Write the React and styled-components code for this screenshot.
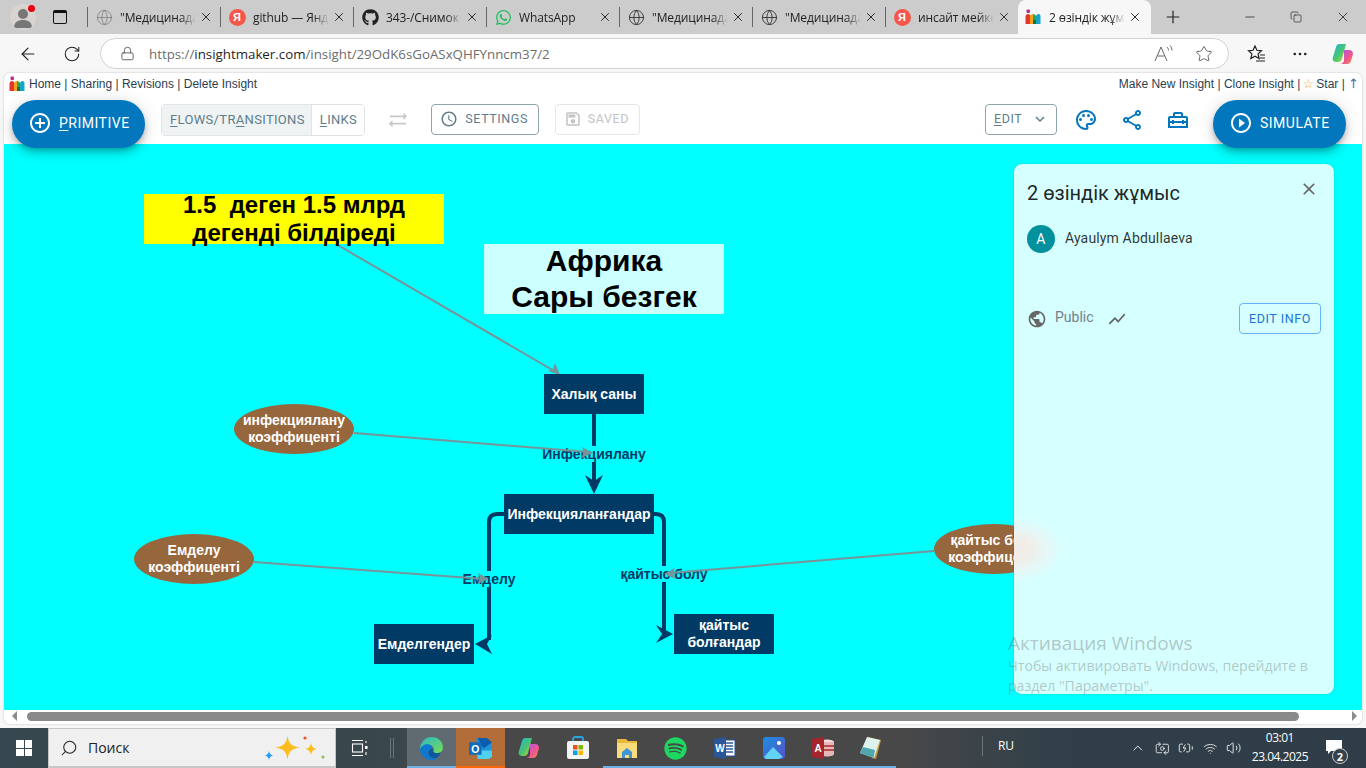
import React from 'react';
import styled, { createGlobalStyle } from 'styled-components';
import { ArrowLeft, RotateCw, Lock, Star, MoreHorizontal, Plus, Minus, X, Copy, Globe, Search, ChevronUp, Volume2, Wifi, BatteryCharging, SwitchCamera } from 'lucide-react';
import { FaGithub, FaWhatsapp, FaSpotify } from 'react-icons/fa';
import {
  MdAddCircleOutline, MdAccessTime, MdOutlineSave, MdSyncAlt, MdExpandMore, MdOutlinePalette,
  MdOutlineShare, MdOutlineHomeRepairService, MdPlayCircleOutline, MdClose, MdPublic, MdShowChart
} from 'react-icons/md';

const NAVY = '#023a66';
const GREY_LINK = '#76949a';

const Global = createGlobalStyle`
  html, body { margin: 0; padding: 0; background: #f7f7f7; overflow: hidden; }
  * { box-sizing: border-box; }
`;

const Frame = styled.div`
  position: relative;
  width: 1366px;
  height: 768px;
  overflow: hidden;
  display: flex;
  flex-direction: column;
  background: #f7f7f7;
  font-family: "Open Sans", "Noto Sans", sans-serif;
`;

/* browser chrome */
const TabStrip = styled.div`
  height: 34px;
  display: flex;
  align-items: stretch;
  background: #cccccc;
  color: #222;
`;
const Profile = styled.div`
  width: 26px;
  height: 26px;
  margin: 4px 0 0 10px;
  border-radius: 50%;
  background: #d9d4d0;
  overflow: hidden;
`;
const ProfileWrap = styled.div`
  position: relative;
  width: 46px;
`;
const RedDot = styled.span`
  position: absolute;
  top: 5px;
  left: 28px;
  width: 7px;
  height: 7px;
  border-radius: 50%;
  background: #e8000d;
`;
const SideIcon = styled.div`
  width: 14px;
  height: 14px;
  margin: 10px 0 0 7px;
  border: 1.6px solid #111;
  border-top-width: 3px;
  border-radius: 2px;
`;
const Tabs = styled.div`
  display: flex;
  margin-left: 20px;
`;
const TabItem = styled.div`
  position: relative;
  width: 133px;
  display: flex;
  align-items: center;
  padding-left: ${p => (p.$active ? '6px' : '8px')};
  background: ${p => (p.$active ? '#f7f7f7' : 'transparent')};
  border-radius: ${p => (p.$active ? '8px 8px 0 0' : '0')};
  font-size: 12px;
  &::before {
    content: '';
    display: ${p => (p.$active ? 'none' : 'block')};
    position: absolute;
    left: 0;
    top: 7px;
    height: 20px;
    width: 1px;
    background: #666;
  }
`;
const TabIcon = styled.span`
  width: 18px;
  height: 18px;
  flex: none;
  display: flex;
  align-items: center;
  justify-content: center;
`;
const TabTitle = styled.span`
  width: 76px;
  margin-left: 7px;
  white-space: nowrap;
  overflow: hidden;
  letter-spacing: -0.1px;
  -webkit-mask-image: linear-gradient(to right, #000 80%, transparent 100%);
  mask-image: linear-gradient(to right, #000 80%, transparent 100%);
`;
const TabClose = styled.span`
  display: flex;
  margin-left: 3px;
  color: #222;
`;
const Yandex = styled.span`
  width: 17px;
  height: 17px;
  border-radius: 50%;
  background: #f7574a;
  color: #fff;
  font: bold 11px "Liberation Sans", sans-serif;
  display: flex;
  align-items: center;
  justify-content: center;
`;
const NewTab = styled.div`
  width: 44px;
  display: flex;
  align-items: center;
  justify-content: center;
`;
const WindowButtons = styled.div`
  margin-left: auto;
  display: flex;
  align-items: center;
`;
const WindowButton = styled.div`
  width: 46.5px;
  display: flex;
  justify-content: center;
  color: #222;
`;

const AddressRow = styled.div`
  height: 39px;
  display: flex;
  align-items: center;
  color: #222;
`;
const NavButton = styled.div`
  width: 44px;
  margin-left: ${p => p.$ml || 0}px;
  display: flex;
  justify-content: center;
`;
const UrlPill = styled.div`
  width: 1129px;
  height: 31px;
  margin-left: 6px;
  display: flex;
  align-items: center;
  padding: 0 15px 0 19px;
  background: #fff;
  border: 1px solid #d2d2d2;
  border-radius: 16px;
`;
const Url = styled.span`
  margin-left: 14px;
  font-size: 13.3px;
  color: #6d6d6d;
  b { font-weight: 400; color: #1f1f1f; }
`;
const ReadAloud = styled.svg`
  margin-left: auto;
`;
const PillStar = styled.span`
  display: flex;
  margin-left: 20px;
  color: #555;
`;
const BrowserTools = styled.div`
  display: flex;
  align-items: center;
  margin-left: 6px;
`;
const BrowserTool = styled.div`
  width: 43px;
  display: flex;
  justify-content: center;
`;

/* page */
const Page = styled.div`
  width: 1358px;
  height: 651px;
  margin-left: 4px;
  display: flex;
  flex-direction: column;
  background: #fff;
  border-radius: 6px;
  box-shadow: 0 0 2px rgba(0, 0, 0, 0.25);
`;
const TopLinks = styled.div`
  height: 20px;
  display: flex;
  align-items: center;
  justify-content: space-between;
  padding: 2px 3px 0 5px;
  font: 12px/14px "Liberation Sans", Arial, sans-serif;
  color: #2c3e50;
`;
const LinkGroup = styled.div`
  display: flex;
  align-items: center;
  gap: 4px;
`;
const GoldStar = styled.span`
  margin: 0 -1px;
  color: #e0a526;
  font: 12.5px/1 "DejaVu Sans", sans-serif;
`;
const UpArrow = styled.span`
  color: #3b6fb5;
  font: 13px/1 "DejaVu Sans", sans-serif;
`;
const Toolbar = styled.div`
  position: relative;
  z-index: 3;
  height: 51px;
  display: flex;
  align-items: flex-start;
  padding: 7px 16px 0 8px;
  font-family: Roboto, sans-serif;
`;
const Fab = styled.button`
  width: 133px;
  height: 48px;
  flex: none;
  display: flex;
  align-items: center;
  gap: 7px;
  padding: 0 0 2px 16px;
  border: none;
  border-radius: 24px;
  background: #0277bd;
  color: #fff;
  font: 400 14px Roboto, sans-serif;
  letter-spacing: 0.5px;
  box-shadow: 0 3px 5px -1px rgba(0, 0, 0, 0.2), 0 6px 10px rgba(0, 0, 0, 0.14), 0 1px 18px rgba(0, 0, 0, 0.12);
  u { text-decoration-thickness: 1px; text-underline-offset: 2px; }
`;
const FlowGroup = styled.div`
  width: 204px;
  display: flex;
  height: 32px;
  margin: 4px 0 0 16px;
  border: 1px solid #dfe5e7;
  border-radius: 4px;
  overflow: hidden;
`;
const Toggle = styled.div`
  flex: ${p => (p.$on ? 'none' : '1')};
  display: flex;
  align-items: center;
  padding: 0 6px 2px 8px;
  background: ${p => (p.$on ? '#eff3f4' : '#fff')};
  border-left: ${p => (p.$on ? 'none' : '1px solid #dfe5e7')};
  color: #607d8b;
  font-size: 13px;
  letter-spacing: 0.33px;
  u { text-underline-offset: 2px; }
`;
const SwapSlot = styled.div`
  width: 66px;
  height: 32px;
  margin-top: 4px;
  display: flex;
  align-items: center;
  justify-content: center;
  color: #c9c9c9;
`;
const OutlineButton = styled.div`
  height: 31px;
  width: ${p => p.$w}px;
  margin: 4px 0 0 ${p => p.$ml || 0}px;
  display: flex;
  align-items: center;
  justify-content: space-between;
  padding: 0 10px 2px 8px;
  border: 1px solid ${p => (p.$off ? '#e6e6e6' : '#90a4ae')};
  border-radius: 4px;
  color: ${p => (p.$off ? '#c4c4c4' : '#607d8b')};
  font-size: 12.5px;
  letter-spacing: 0.6px;
  u { text-underline-offset: 2px; }
`;
const EditChevron = styled(MdExpandMore)`
  margin-right: -3px;
`;
const Spacer = styled.div`
  flex: 1;
`;
const IconSlot = styled.div`
  width: 46px;
  height: 32px;
  margin: 4px ${p => p.$mr || 0}px 0 ${p => p.$ml || 0}px;
  display: flex;
  align-items: center;
  justify-content: center;
  color: #0277bd;
`;

/* diagram */
const Canvas = styled.div`
  position: relative;
  flex: none;
  height: 566px;
  background: #00ffff;
  overflow: hidden;
`;
const EdgeLayer = styled.svg`
  position: absolute;
  left: 0;
  top: 0;
  z-index: ${p => p.$z};
`;
const Box = styled.div`
  position: absolute;
  left: ${p => p.$x - 4}px;
  top: ${p => p.$y - 144}px;
  width: ${p => p.$w}px;
  height: ${p => p.$h}px;
  z-index: 3;
  display: flex;
  align-items: center;
  justify-content: center;
  text-align: center;
  font-family: "Liberation Sans", Arial, sans-serif;
  font-weight: 700;
`;
const Stock = styled(Box)`
  background: ${NAVY};
  color: #fff;
  font-size: 14px;
  line-height: 17px;
`;
const Variable = styled(Box)`
  background: #96663d;
  color: #fff;
  border-radius: 50%;
  font-size: 14px;
  line-height: 17px;
`;
const Note = styled(Box)`
  padding-bottom: ${p => p.$pb || 0}px;
  background: ${p => p.$bg};
  color: #000;
  font-size: ${p => p.$size}px;
  line-height: ${p => p.$lh}px;
`;
const FlowLabel = styled.div`
  position: absolute;
  left: ${p => p.$x - 4}px;
  top: ${p => p.$y - 144}px;
  transform: translate(-50%, -50%);
  z-index: 2;
  color: ${NAVY};
  background: #00ffff;
  font: 700 14px/16px "Liberation Sans", Arial, sans-serif;
  white-space: nowrap;
`;

const Panel = styled.div`
  position: absolute;
  left: 1010px;
  top: 20px;
  width: 320px;
  height: 530px;
  z-index: 5;
  padding: 16px 13px;
  background:
    radial-gradient(ellipse 50px 34px at 0 385px, #f3ebe5 0%, #f1eeea 35%, rgba(233, 245, 244, 0.8) 65%, rgba(214, 255, 255, 0) 100%),
    #d6ffff;
  border-radius: 8px;
  box-shadow: 0 0 2px rgba(0, 0, 0, 0.2);
  font-family: Roboto, sans-serif;
`;
const PanelHead = styled.div`
  display: flex;
  justify-content: space-between;
  align-items: flex-start;
  height: 45px;
  color: rgba(0, 0, 0, 0.87);
  font-size: 20px;
  line-height: 26px;
`;
const CloseBtn = styled.span`
  display: flex;
  margin: -1px 2px 0 0;
  color: #666;
`;
const Author = styled.div`
  display: flex;
  align-items: center;
  gap: 10px;
  font-size: 14px;
  letter-spacing: 0.15px;
  color: rgba(0, 0, 0, 0.8);
  span:last-child { margin-top: -2px; }
`;
const Avatar = styled.div`
  width: 28px;
  height: 28px;
  border-radius: 50%;
  background: #00909e;
  color: #fff;
  display: flex;
  align-items: center;
  justify-content: center;
  font-size: 14px;
`;
const PanelRow = styled.div`
  display: flex;
  align-items: center;
  margin-top: 50px;
  color: #666;
  font-size: 14px;
`;
const PublicText = styled.span`
  margin: -3px 0 0 8px;
  color: #75808a;
`;
const TrendIcon = styled.span`
  display: flex;
  margin-left: 13px;
  color: #666;
`;
const EditInfo = styled.div`
  margin-left: auto;
  width: 82px;
  height: 31px;
  display: flex;
  align-items: center;
  justify-content: center;
  border: 1px solid #64b5f6;
  border-radius: 4px;
  color: #1976d2;
  font-size: 12.5px;
  letter-spacing: 0.6px;
`;

/* scrollbar */
const ScrollRow = styled.div`
  flex: 1;
  display: flex;
  align-items: center;
  padding: 1px 5px 3px 8px;
  gap: 7px;
`;
const ScrollArrow = styled.span`
  width: 0;
  height: 0;
  border-top: 5px solid transparent;
  border-bottom: 5px solid transparent;
  ${p => (p.$right ? 'border-left: 5px solid #8a8a8a;' : 'border-right: 5px solid #8a8a8a;')}
  ${p => (p.$right ? 'margin-left: auto;' : '')}
`;
const ScrollThumb = styled.div`
  width: 1272px;
  height: 9px;
  margin-left: 3px;
  border-radius: 5px;
  background: #8a8a8a;
`;

/* taskbar */
const Taskbar = styled.div`
  margin-top: 4px;
  height: 40px;
  flex: none;
  display: flex;
  align-items: stretch;
  color: #fff;
  background: linear-gradient(to right, #37474f 0, #3a474d 400px, #484848 420px, #484848 900px, #303f49 1060px, #2e3d47 100%);
`;
const StartButton = styled.div`
  width: 48px;
  display: flex;
  align-items: center;
  justify-content: center;
`;
const WinLogo = styled.div`
  display: grid;
  grid-template-columns: 7.5px 7.5px;
  grid-template-rows: 7.5px 7.5px;
  gap: 1px;
  span { background: #fff; }
`;
const SearchBox = styled.div`
  width: 288px;
  display: flex;
  align-items: center;
  padding: 0 10px 0 11px;
  background: #f0f0f0;
  border: 1px solid #c6c6c6;
  border-bottom-width: 2px;
  color: #222;
  font-size: 14px;
  gap: 10px;
`;
const LensIcon = styled(Search)`
  transform: scaleX(-1);
`;
const Sparkles = styled.svg`
  margin-left: auto;
`;
const TaskView = styled.div`
  width: 54px;
  padding-right: 6px;
  display: flex;
  align-items: center;
  justify-content: center;
`;
const Grip = styled.div`
  width: 17px;
  display: flex;
  align-items: center;
  gap: 2px;
  span { width: 1px; height: 20px; background: #66747b; }
`;
const Apps = styled.div`
  display: flex;
  margin-right: 86px;
`;
const AppSlot = styled.div`
  width: 48.9px;
  display: flex;
  align-items: center;
  justify-content: center;
  background: ${p => p.$bg || 'transparent'};
  box-shadow: ${p => (p.$line ? `inset 0 -2px 0 ${p.$line}` : 'none')};
`;
const Lang = styled.div`
  display: flex;
  align-items: center;
  gap: 15px;
  width: 148px;
  font-size: 12px;
  padding-bottom: 5px;
  i { width: 1px; height: 20px; background: #66747b; }
`;
const Tray = styled.div`
  display: flex;
  align-items: center;
  gap: 9px;
  width: 112px;
`;
const Clock = styled.div`
  width: 76px;
  text-align: center;
  font-size: 12px;
  line-height: 19px;
  letter-spacing: -0.5px;
`;
const Notif = styled.div`
  position: relative;
  width: 32px;
  display: flex;
  align-items: center;
  justify-content: center;
  padding-bottom: 3px;
`;
const NotifCount = styled.span`
  position: absolute;
  left: 14px;
  top: 20px;
  width: 16px;
  height: 16px;
  border-radius: 50%;
  border: 1px solid #ccc;
  background: #35434c;
  font-size: 11px;
  font-weight: 700;
  display: flex;
  align-items: center;
  justify-content: center;
`;

/* activation watermark */
const Watermark = styled.div`
  position: absolute;
  left: 1008px;
  top: 630px;
  z-index: 9;
  color: rgba(120, 120, 120, 0.42);
  font-size: 14.1px;
  line-height: 20px;
  pointer-events: none;
`;
const WatermarkTitle = styled.div`
  font-size: 19px;
  line-height: 26px;
`;

const InsightLogo = ({ size = 16 }) => (
  <svg width={size} height={size} viewBox="0 0 16 16">
    <rect x="1.500" y="0.500" width="3.500" height="3.500" rx="1" fill="#b0308f" />
    <path d="M0.500 15V8c0-2 1-3 2.500-3S5 6 5.500 7v8z" fill="#e5352e" />
    <path d="M5 7c.7-1 1.500-2 3-2v10H5z" fill="#f7a21b" />
    <path d="M8 5c1.500 0 2.300 1 3 2v8H8z" fill="#2aa84a" />
    <path d="M8 11h3v4H8z" fill="#15703a" />
    <path d="M11 7c.5-1 1-2 2.500-2S15.500 6 15.500 8v7H11z" fill="#16a6c9" />
  </svg>
);

const ProfileArt = () => (
  <svg width="26" height="26" viewBox="0 0 26 26">
    <circle cx="13" cy="10" r="5" fill="#777" />
    <path d="M4 24c0-6 4-8 9-8s9 2 9 8z" fill="#777" />
  </svg>
);

const CopilotMark = ({ size = 24 }) => (
  <svg width={size} height={size} viewBox="0 0 24 24">
    <defs>
      <linearGradient id="cpA" x1="0" y1="0" x2="1" y2="1">
        <stop offset="0" stopColor="#22b4e8" />
        <stop offset="0.55" stopColor="#48c66a" />
        <stop offset="1" stopColor="#f6d33c" />
      </linearGradient>
      <linearGradient id="cpB" x1="0" y1="0" x2="1" y2="1">
        <stop offset="0" stopColor="#a855f7" />
        <stop offset="0.6" stopColor="#f0568c" />
        <stop offset="1" stopColor="#f5903d" />
      </linearGradient>
    </defs>
    <path d="M8 2h7l-4 15c-.5 2-2 3-4 3H5c-3 0-4-3-3-5l3-10c.5-2 1.500-3 3-3z" fill="url(#cpA)" />
    <path d="M13 8h5c3 0 4 2 4 4l-2 7c-.6 2-2 3-4 3h-7c2 0 3-1 4-3z" fill="url(#cpB)" />
  </svg>
);

const Edge = () => (
  <svg width="25" height="25" viewBox="0 0 24 24">
    <defs>
      <linearGradient id="edgeG" x1="0" y1="0" x2="1" y2="1">
        <stop offset="0" stopColor="#29b8c8" />
        <stop offset="1" stopColor="#78dc55" />
      </linearGradient>
    </defs>
    <path d="M12 1c6.500 0 11 4.500 11 10 0 3.500-3 5.500-6 5.500-1.500 0-3-.5-3.500-1.500 1-1 1-2 .5-3.500C13 9 10 8 7 9 4 10 2 12.500 1 14 .5 7 5.500 1 12 1z" fill="url(#edgeG)" />
    <path d="M1 13c1-3 4-5 7-5 3 0 5 2 5 4-2 0-4 2-4 4 0 3 3 6 8 5-1.500 1.500-3.500 2-5 2C6 23 1.500 18.500 1 13z" fill="#0d78d0" />
    <path d="M9 16c0-2 2-4 4-4 0 2 1 4.500 4 4.500 1.500 0 3-.5 4-1-1 3-2.500 4.500-4 5.500-5 1-8-2-8-5z" fill="#10589e" />
  </svg>
);
const Outlook = () => (
  <svg width="25" height="25" viewBox="0 0 24 24">
    <path d="M8 2h10l5 4v14l-3 2H9z" fill="#1f94da" />
    <path d="M9 2h9l5 4-8 6z" fill="#0d5cab" />
    <path d="M9 14h14v6l-3 2H9z" fill="#4fd0ee" />
    <rect x="1" y="6" width="12" height="12" fill="#0f6cbd" />
    <text x="7" y="16" textAnchor="middle" fontFamily="Liberation Sans" fontSize="10" fontWeight="700" fill="#fff">O</text>
  </svg>
);
const Store = () => (
  <svg width="24" height="24" viewBox="0 0 24 24">
    <path d="M7 6V3c0-1 1-2 2-2h6c1 0 2 1 2 2v3" fill="none" stroke="#2aa5df" strokeWidth="1.800" />
    <rect x="1" y="5" width="22" height="18" rx="2" fill="#f4f4f4" />
    <rect x="7" y="9" width="4.500" height="4.500" fill="#f25022" />
    <rect x="12.500" y="9" width="4.500" height="4.500" fill="#7fba00" />
    <rect x="7" y="14.500" width="4.500" height="4.500" fill="#00a4ef" />
    <rect x="12.500" y="14.500" width="4.500" height="4.500" fill="#ffb900" />
  </svg>
);
const Folder = () => (
  <svg width="24" height="24" viewBox="0 0 24 24">
    <path d="M2 3h9l2 2h9v17H2z" fill="#e8b93a" />
    <path d="M2 7h20v15H2z" fill="#f8dc7b" />
    <path d="M7 22v-6l5-4 5 4v6h-3v-3h-4v3z" fill="#3f95d6" />
  </svg>
);
const Word = () => (
  <svg width="24" height="24" viewBox="0 0 24 24">
    <path d="M10 4h12v16H10z" fill="#fff" stroke="#2b579a" />
    <path d="M13 7h7M13 10h7M13 13h7M13 16h7" stroke="#2b579a" strokeWidth="1.400" />
    <path d="M1 3l12-2v22L1 21z" fill="#2b579a" />
    <text x="7" y="16" textAnchor="middle" fontFamily="Liberation Sans" fontSize="10" fontWeight="700" fill="#fff">W</text>
  </svg>
);
const Photos = () => (
  <svg width="24" height="24" viewBox="0 0 24 24">
    <defs>
      <linearGradient id="phG" x1="0" y1="0" x2="1" y2="1">
        <stop offset="0" stopColor="#1a8fe0" />
        <stop offset="1" stopColor="#5a4fc9" />
      </linearGradient>
    </defs>
    <rect x="1" y="1" width="22" height="22" rx="3" fill="url(#phG)" />
    <circle cx="17" cy="7" r="2" fill="#fff" />
    <path d="M2 21l9-10 10 10-4 2H4z" fill="#62d2f5" />
  </svg>
);
const Access = () => (
  <svg width="24" height="24" viewBox="0 0 24 24">
    <ellipse cx="16" cy="6" rx="7" ry="2.500" fill="#f6dcdc" />
    <path d="M10 6h13v12c0 1.500-3 2.500-7 2.500s-6-1-6-2.500z" fill="#e8b8b8" />
    <path d="M12 10h11M12 14h11" stroke="#a4262c" strokeWidth="1.600" />
    <path d="M1 3l12-2v22L1 21z" fill="#a4262c" />
    <text x="7" y="16" textAnchor="middle" fontFamily="Liberation Sans" fontSize="10" fontWeight="700" fill="#fff">A</text>
  </svg>
);
const Notes = () => (
  <svg width="24" height="24" viewBox="0 0 24 24">
    <path d="M9 1l13 3-5 19-4-1z" fill="#c89a40" />
    <path d="M8 1l13 3-6 18L1 17z" fill="#dff2ee" />
    <path d="M4 11l12 3-1.500 8L1 17z" fill="#4fa8b0" />
  </svg>
);
const Spark = () => (
  <Sparkles width="60" height="24" viewBox="0 0 60 24">
    <path d="M22.500 0c1.300 7.500 3.500 10 12.500 11.500-9 1.500-11.200 4-12.500 12-1.300-8-3.500-10.500-12.500-12C19 10 21.200 7.500 22.500 0z" fill="#fbbc1d" />
    <path d="M46 7c.7 3.500 1.800 5 5.500 6-3.700 1-4.800 2.500-5.500 6-.7-3.500-1.800-5-5.500-6 3.700-1 4.800-2.500 5.500-6z" fill="#fbbc1d" />
    <path d="M4 15c.5 2.500 1.200 3.500 4 4.500-2.800 1-3.500 2-4 4.500-.5-2.500-1.200-3.500-4-4.500 2.800-1 3.500-2 4-4.500z" fill="#2a9df4" />
    <circle cx="40" cy="2" r="1.600" fill="#e8562a" />
    <circle cx="58" cy="21" r="1.600" fill="#8bc34a" />
  </Sparkles>
);
const TaskViewIcon = () => (
  <svg width="18" height="18" viewBox="0 0 18 18" fill="none" stroke="#fff" strokeWidth="1.100">
    <path d="M1 1.500h11M1 16.500h11" />
    <rect x="1.500" y="5" width="10" height="8" />
    <path d="M15 2v2M15 13v3" />
    <rect x="14" y="7" width="2.500" height="3" fill="#fff" stroke="none" />
  </svg>
);
const FavoritesIcon = () => (
  <svg width="20" height="20" viewBox="0 0 20 20" fill="none" stroke="#222" strokeWidth="1.200">
    <path d="M8 2l1.900 4.300 4.600.5-3.400 3.100 1 4.600L8 12.200 3.900 14.500l1-4.600L1.500 6.800l4.600-.5z" />
    <path d="M13 11h5M13 14h5M9 17h9" />
  </svg>
);
const ReadAloudIcon = () => (
  <ReadAloud width="22" height="20" viewBox="0 0 22 20" fill="none" stroke="#666" strokeWidth="1">
    <path d="M2 17L8 3l6 14M4.500 12h7" />
    <path d="M14 3c1 1 1.500 2 1.500 3.500M17 1.500c1.300 1.500 2 3 2 5" />
  </ReadAloud>
);

const tabs = [
  { title: '"Медицинада', icon: <Globe size={17} strokeWidth={1} color="#777" /> },
  { title: 'github — Янд', icon: <Yandex>Я</Yandex> },
  { title: '343-/Снимок', icon: <FaGithub size={17} color="#222" /> },
  { title: 'WhatsApp', icon: <FaWhatsapp size={17} color="#1ebe5d" /> },
  { title: '"Медицинада', icon: <Globe size={17} strokeWidth={1.3} color="#333" /> },
  { title: '"Медицинада', icon: <Globe size={17} strokeWidth={1.3} color="#333" /> },
  { title: 'инсайт мейке', icon: <Yandex>Я</Yandex> },
  { title: '2 өзіндік жұм', icon: <InsightLogo />, active: true },
];

const appIcons = [
  { el: <Edge />, bg: '#5f6b70', line: '#6cb0e6' },
  { el: <Outlook />, bg: '#b36d38', line: '#f76707' },
  { el: <CopilotMark /> },
  { el: <Store /> },
  { el: <Folder />, line: '#6cb0e6' },
  { el: <FaSpotify size={23} color="#1ed760" />, line: '#6cb0e6' },
  { el: <Word />, line: '#6cb0e6' },
  { el: <Photos />, line: '#6cb0e6' },
  { el: <Access />, line: '#6cb0e6' },
  { el: <Notes />, line: '#6cb0e6' },
];

function Diagram() {
  return (
    <Canvas>
      <EdgeLayer $z={1} width="1358" height="566" viewBox="4 144 1358 566">
        <g fill="none" stroke={NAVY} strokeWidth="4">
          <path d="M594 414V484" />
          <path d="M504 514H497Q489 514 489 522V640" />
          <path d="M654 514H656Q664 514 664 522V630" />
        </g>
        <g fill={NAVY}>
          <path d="M585 475L594 481L603 475L594 494Z" />
          <path d="M475 644L492 635L487 644L492 654Z" />
          <path d="M673 634L656 625L662 634L656 643Z" />
        </g>
      </EdgeLayer>

      <FlowLabel $x={594} $y={454}>Инфекциялану</FlowLabel>
      <FlowLabel $x={489} $y={579}>Емделу</FlowLabel>
      <FlowLabel $x={664} $y={574}>қайтыс болу</FlowLabel>

      <EdgeLayer $z={2} width="1358" height="566" viewBox="4 144 1358 566">
        <g fill="none" stroke={GREY_LINK} strokeWidth="2">
          <path d="M336 244L556 372" />
          <path d="M354 433L588 452" />
          <path d="M254 562L484 579" />
          <path d="M934 551L670 573" />
        </g>
        <g fill={GREY_LINK}>
          <path d="M560 375L548 371L553 369L555 363Z" />
          <path d="M593 453L581 458L584 452L582 447Z" />
          <path d="M489 579L477 584L480 579L478 573Z" />
          <path d="M664 574L675 568L673 573L676 579Z" />
        </g>
      </EdgeLayer>

      <Note $x={144} $y={194} $w={300} $h={50} $bg="#ffff00" $size={24} $lh={28} $pb={1}>
        <span>1.5&nbsp; деген 1.5 млрд<br />дегенді білдіреді</span>
      </Note>
      <Note $x={484} $y={244} $w={240} $h={70} $bg="#ccffff" $size={30} $lh={36}>
        <span>Африка<br />Сары безгек</span>
      </Note>

      <Stock $x={544} $y={374} $w={100} $h={40}>Халық саны</Stock>
      <Stock $x={504} $y={494} $w={150} $h={40}>Инфекцияланғандар</Stock>
      <Stock $x={374} $y={624} $w={100} $h={40}>Емделгендер</Stock>
      <Stock $x={674} $y={614} $w={100} $h={40}><span>қайтыс<br />болғандар</span></Stock>

      <Variable $x={234} $y={404} $w={120} $h={50}><span>инфекциялану<br />коэффиценті</span></Variable>
      <Variable $x={134} $y={534} $w={120} $h={50}><span>Емделу<br />коэффиценті</span></Variable>
      <Variable $x={934} $y={524} $w={120} $h={50}><span>қайтыс болу<br />коэффиценті</span></Variable>

      <Panel>
        <PanelHead>
          <span>2 өзіндік жұмыс</span>
          <CloseBtn><MdClose size={20} /></CloseBtn>
        </PanelHead>
        <Author>
          <Avatar>A</Avatar>
          <span>Ayaulym Abdullaeva</span>
        </Author>
        <PanelRow>
          <MdPublic size={20} />
          <PublicText>Public</PublicText>
          <TrendIcon><MdShowChart size={20} /></TrendIcon>
          <EditInfo>EDIT INFO</EditInfo>
        </PanelRow>
      </Panel>
    </Canvas>
  );
}

export default function App() {
  return (
    <Frame>
      <Global />
      <TabStrip>
        <ProfileWrap>
          <Profile><ProfileArt /></Profile>
          <RedDot />
        </ProfileWrap>
        <SideIcon />
        <Tabs>
          {tabs.map((t, i) => (
            <TabItem key={i} $active={t.active}>
              <TabIcon>{t.icon}</TabIcon>
              <TabTitle>{t.title}</TabTitle>
              <TabClose><X size={14} strokeWidth={1.6} /></TabClose>
            </TabItem>
          ))}
        </Tabs>
        <NewTab><Plus size={20} strokeWidth={1.4} /></NewTab>
        <WindowButtons>
          <WindowButton><Minus size={14} strokeWidth={1.3} /></WindowButton>
          <WindowButton><Copy size={12} strokeWidth={1.3} /></WindowButton>
          <WindowButton><X size={16} strokeWidth={1.2} /></WindowButton>
        </WindowButtons>
      </TabStrip>

      <AddressRow>
        <NavButton $ml={6}><ArrowLeft size={20} strokeWidth={1.4} /></NavButton>
        <NavButton><RotateCw size={18} strokeWidth={1.4} /></NavButton>
        <UrlPill>
          <Lock size={15} strokeWidth={1.4} color="#555" />
          <Url>https://<b>insightmaker.com</b>/insight/29OdK6sGoASxQHFYnncm37/2</Url>
          <ReadAloudIcon />
          <PillStar><Star size={18} strokeWidth={1.2} /></PillStar>
        </UrlPill>
        <BrowserTools>
          <BrowserTool><FavoritesIcon /></BrowserTool>
          <BrowserTool><MoreHorizontal size={18} strokeWidth={1.6} /></BrowserTool>
          <BrowserTool><CopilotMark /></BrowserTool>
        </BrowserTools>
      </AddressRow>

      <Page>
        <TopLinks>
          <LinkGroup>
            <InsightLogo />
            <span>Home | Sharing | Revisions | Delete Insight</span>
          </LinkGroup>
          <LinkGroup>
            <span>Make New Insight | Clone Insight | <GoldStar>☆</GoldStar> Star | <UpArrow>↑</UpArrow></span>
          </LinkGroup>
        </TopLinks>

        <Toolbar>
          <Fab><MdAddCircleOutline size={24} /><span><u>P</u>RIMITIVE</span></Fab>
          <FlowGroup>
            <Toggle $on><span><u>F</u>LOWS/TR<u>A</u>NSITIONS</span></Toggle>
            <Toggle><span><u>L</u>INKS</span></Toggle>
          </FlowGroup>
          <SwapSlot><MdSyncAlt size={22} /></SwapSlot>
          <OutlineButton $w={108}><MdAccessTime size={18} /><span>SETTINGS</span></OutlineButton>
          <OutlineButton $off $ml={16} $w={85}><MdOutlineSave size={18} /><span>SAVED</span></OutlineButton>
          <Spacer />
          <OutlineButton $w={72}><span><u>E</u>DIT</span><EditChevron size={18} /></OutlineButton>
          <IconSlot $ml={6}><MdOutlinePalette size={24} /></IconSlot>
          <IconSlot><MdOutlineShare size={24} /></IconSlot>
          <IconSlot $mr={12}><MdOutlineHomeRepairService size={24} /></IconSlot>
          <Fab><MdPlayCircleOutline size={24} /><span>SIMULATE</span></Fab>
        </Toolbar>

        <Diagram />

        <ScrollRow>
          <ScrollArrow />
          <ScrollThumb />
          <ScrollArrow $right />
        </ScrollRow>
      </Page>

      <Taskbar>
        <StartButton>
          <WinLogo><span /><span /><span /><span /></WinLogo>
        </StartButton>
        <SearchBox>
          <LensIcon size={18} strokeWidth={1.4} />
          <span>Поиск</span>
          <Spark />
        </SearchBox>
        <TaskView><TaskViewIcon /></TaskView>
        <Grip><span /><span /></Grip>
        <Apps>
          {appIcons.map((a, i) => (
            <AppSlot key={i} $bg={a.bg} $line={a.line}>{a.el}</AppSlot>
          ))}
        </Apps>
        <Lang><i /><span>RU</span></Lang>
        <Tray>
          <ChevronUp size={16} strokeWidth={1.4} />
          <SwitchCamera size={15} strokeWidth={1.3} />
          <BatteryCharging size={16} strokeWidth={1.3} />
          <Wifi size={15} strokeWidth={1.3} />
          <Volume2 size={16} strokeWidth={1.3} />
        </Tray>
        <Clock>03:01<br />23.04.2025</Clock>
        <Notif>
          <svg width="16" height="14" viewBox="0 0 16 14"><path d="M0 0h16v11H5l-3 3v-3H0z" fill="#fff" /></svg>
          <NotifCount>2</NotifCount>
        </Notif>
      </Taskbar>

      <Watermark>
        <WatermarkTitle>Активация Windows</WatermarkTitle>
        <div>Чтобы активировать Windows, перейдите в</div>
        <div>раздел "Параметры".</div>
      </Watermark>
    </Frame>
  );
}
